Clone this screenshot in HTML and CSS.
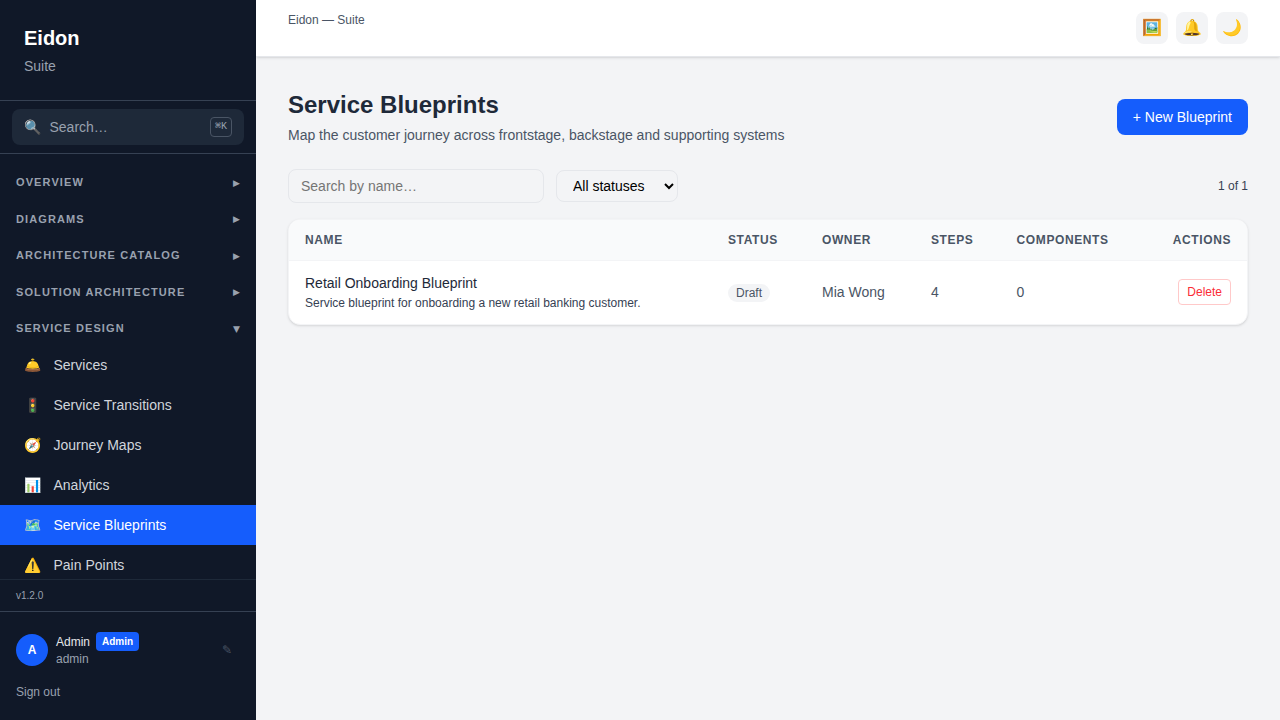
FILE: index.html
```html
<!DOCTYPE html>
<html lang="en">
<head>
    <meta charset="UTF-8">
    <meta name="viewport" content="width=device-width, initial-scale=1.0">
    <title>Eidon — Suite</title>
    <link rel="stylesheet" href="styles.css">
</head>
<body>
<aside class="sidebar">
    <div class="brand">
        <div class="brand-name">Eidon</div>
        <div class="brand-sub">Suite</div>
    </div>
    <div class="search-box">
        <button type="button" class="search-button">
            <span class="search-icon">🔍</span>
            <span class="search-label">Search…</span>
            <kbd>⌘K</kbd>
        </button>
    </div>
    <nav class="nav">
        <button type="button" class="nav-group"><span>Overview</span><span class="arrow">▶</span></button>
        <button type="button" class="nav-group"><span>Diagrams</span><span class="arrow">▶</span></button>
        <button type="button" class="nav-group"><span>Architecture Catalog</span><span class="arrow">▶</span></button>
        <button type="button" class="nav-group"><span>Solution Architecture</span><span class="arrow">▶</span></button>
        <button type="button" class="nav-group open"><span>Service Design</span><span class="arrow">▼</span></button>
        <a href="#" class="nav-item"><span class="nav-icon">🛎️</span>Services</a>
        <a href="#" class="nav-item"><span class="nav-icon">🚦</span>Service Transitions</a>
        <a href="#" class="nav-item"><span class="nav-icon">🧭</span>Journey Maps</a>
        <a href="#" class="nav-item"><span class="nav-icon">📊</span>Analytics</a>
        <a href="#" class="nav-item active"><span class="nav-icon">🗺️</span>Service Blueprints</a>
        <a href="#" class="nav-item"><span class="nav-icon">⚠️</span>Pain Points</a>
    </nav>
    <div class="version">v1.2.0</div>
    <div class="user-panel">
        <div class="user">
            <div class="avatar">A</div>
            <div class="user-info">
                <div class="user-name">Admin <span class="role">Admin</span></div>
                <div class="user-login">admin</div>
            </div>
            <button type="button" class="edit-button">✎</button>
        </div>
        <button type="button" class="sign-out">Sign out</button>
    </div>
</aside>
<div class="content">
    <header class="topbar">
        <div class="breadcrumb">Eidon — Suite</div>
        <div class="topbar-actions">
            <button type="button" class="icon-button">🖼️</button>
            <button type="button" class="icon-button">🔔</button>
            <button type="button" class="icon-button">🌙</button>
        </div>
    </header>
    <main>
        <div class="page-header">
            <div>
                <h1>Service Blueprints</h1>
                <p>Map the customer journey across frontstage, backstage and supporting systems</p>
            </div>
            <button type="button" class="primary-button">+ New Blueprint</button>
        </div>
        <div class="filters">
            <input type="text" placeholder="Search by name…">
            <select>
                <option>All statuses</option>
                <option>Draft</option>
            </select>
            <span class="count">1 of 1</span>
        </div>
        <div class="card">
            <table>
                <thead>
                <tr>
                    <th class="col-name">Name</th>
                    <th class="col-status">Status</th>
                    <th class="col-owner">Owner</th>
                    <th class="col-steps">Steps</th>
                    <th class="col-components">Components</th>
                    <th class="col-actions">Actions</th>
                </tr>
                </thead>
                <tbody>
                <tr>
                    <td>
                        <div class="row-title">Retail Onboarding Blueprint</div>
                        <div class="row-desc">Service blueprint for onboarding a new retail banking customer.</div>
                    </td>
                    <td><span class="badge">Draft</span></td>
                    <td>Mia Wong</td>
                    <td>4</td>
                    <td>0</td>
                    <td class="col-actions"><button type="button" class="delete-button">Delete</button></td>
                </tr>
                </tbody>
            </table>
        </div>
    </main>
</div>
</body>
</html>
```
FILE: styles.css
```css
* {
    box-sizing: border-box;
}
body {
    margin: 0;
    display: flex;
    height: 100vh;
    overflow: hidden;
    font-family: "Liberation Sans", Arial, sans-serif;
    font-size: 14px;
    line-height: 20px;
    color: #1e2939;
    background-color: #f3f4f6;
}
button, input, select {
    font-family: inherit;
    font-size: 14px;
    line-height: 20px;
    margin: 0;
}
button {
    border: none;
    background: none;
    padding: 0;
    cursor: pointer;
}
.sidebar {
    width: 256px;
    flex-shrink: 0;
    display: flex;
    flex-direction: column;
    background-color: #101828;
    color: #fff;
}
.brand {
    padding: 24px;
    border-bottom: 1px solid #364153;
}
.brand-name {
    font-size: 20px;
    line-height: 28px;
    font-weight: bold;
}
.brand-sub {
    margin-top: 4px;
    color: #99a1af;
}
.search-box {
    padding: 8px 12px;
    border-bottom: 1px solid #364153;
}
.search-button {
    display: flex;
    align-items: center;
    gap: 8px;
    width: 100%;
    height: 36px;
    padding: 0 12px;
    border-radius: 8px;
    background-color: #1e2939;
    color: #99a1af;
    text-align: left;
}
.search-icon, .nav-icon {
    width: 17.5px;
}
.search-label {
    flex: 1;
}
kbd {
    height: 20px;
    padding: 1px 4px 0;
    border: 1px solid #4a5565;
    border-radius: 4px;
    font-family: "Liberation Mono", monospace;
    font-size: 10px;
    line-height: 16px;
}
.nav {
    flex: 1;
    min-height: 0;
    padding-top: 12px;
    overflow: hidden;
}
.nav-group {
    display: flex;
    align-items: center;
    justify-content: space-between;
    width: 100%;
    margin-bottom: 4px;
    padding: 8px 16px;
    color: #99a1af;
    font-size: 11px;
    line-height: 16.5px;
    font-weight: bold;
    letter-spacing: 1.1px;
    text-transform: uppercase;
}
.nav-group.open {
    margin-bottom: 0;
}
.arrow {
    margin-top: 2px;
    font-family: "DejaVu Sans", sans-serif;
    font-size: 9px;
    font-weight: normal;
    line-height: 13.5px;
    letter-spacing: 0;
}
.nav-item {
    display: flex;
    align-items: center;
    gap: 12px;
    height: 40px;
    padding: 0 24px;
    color: #d1d5dc;
    text-decoration: none;
}
.nav-item.active {
    background-color: #155dfc;
    color: #fff;
}
.version {
    padding: 8px 16px;
    border-top: 1px solid #1e2939;
    color: #99a1af;
    font-size: 10px;
    line-height: 15px;
}
.user-panel {
    height: 109px;
    padding: 20px 16px;
    border-top: 1px solid #364153;
    font-size: 12px;
    line-height: 16px;
}
.user {
    display: flex;
    align-items: center;
    gap: 8px;
    height: 36px;
    margin-bottom: 16px;
}
.avatar {
    width: 32px;
    height: 32px;
    border-radius: 50%;
    background-color: #155dfc;
    font-weight: bold;
    line-height: 32px;
    text-align: center;
}
.user-info {
    flex: 1;
    padding-bottom: 1px;
}
.user-name {
    display: flex;
    align-items: center;
    gap: 6px;
    color: #e5e7eb;
}
.role {
    padding: 2px 6px;
    border-radius: 4px;
    background-color: #155dfc;
    color: #fff;
    font-size: 10px;
    line-height: 15px;
    font-weight: bold;
}
.user-login {
    color: #99a1af;
}
.edit-button {
    padding: 0 8px;
    color: #4a5565;
    font-size: 12px;
    line-height: 16px;
}
.sign-out {
    display: block;
    color: #99a1af;
    font-size: 12px;
    line-height: 16px;
}
.content {
    flex: 1;
    min-width: 0;
}
.topbar {
    display: flex;
    justify-content: space-between;
    padding: 12px 32px;
    border-bottom: 1px solid #e5e7eb;
    background-color: #fff;
    box-shadow: 0 1px 3px rgba(0, 0, 0, 0.1), 0 1px 2px -1px rgba(0, 0, 0, 0.1);
}
.breadcrumb {
    color: #4a5565;
    font-size: 12px;
    line-height: 16px;
}
.topbar-actions {
    display: flex;
    gap: 8px;
}
.icon-button {
    width: 32px;
    height: 32px;
    border-radius: 8px;
    background-color: #f3f4f6;
    font-size: 16px;
    line-height: 24px;
}
main {
    padding: 32px;
}
.page-header {
    display: flex;
    align-items: center;
    justify-content: space-between;
    margin-bottom: 24px;
}
h1 {
    margin: 0 0 4px;
    font-size: 24px;
    line-height: 32px;
}
p {
    margin: 0;
    color: #4a5565;
}
.primary-button {
    padding: 8px 16px;
    border-radius: 8px;
    background-color: #155dfc;
    color: #fff;
}
.filters {
    display: flex;
    align-items: center;
    gap: 12px;
    margin-bottom: 16px;
}
.filters input {
    width: 256px;
    height: 34px;
    padding: 6px 12px;
    border: 1px solid #e5e7eb;
    border-radius: 8px;
    background: transparent;
}
.filters select {
    width: 122px;
    height: 32px;
    padding: 0 12px;
    border: 1px solid #e5e7eb;
    border-radius: 8px;
    background-color: transparent;
    color: #000;
}
.count {
    margin-left: auto;
    color: #364153;
    font-size: 12px;
    line-height: 16px;
}
.card {
    overflow: hidden;
    border: 1px solid #f3f4f6;
    border-radius: 12px;
    background-color: #fff;
    box-shadow: 0 1px 3px rgba(0, 0, 0, 0.1), 0 1px 2px -1px rgba(0, 0, 0, 0.1);
}
table {
    width: 100%;
    table-layout: fixed;
    border-spacing: 0;
    color: #4a5565;
}
th {
    padding: 12px 16px;
    border-bottom: 1px solid #f3f4f6;
    background-color: #f9fafb;
    font-size: 12px;
    line-height: 16px;
    letter-spacing: 0.6px;
    text-align: left;
    text-transform: uppercase;
}
td {
    height: 63px;
    padding: 0 16px 1px;
}
.col-name {
    width: 423px;
}
.col-status {
    width: 94px;
}
.col-owner {
    width: 109px;
}
.col-steps {
    width: 85.6px;
}
.col-components {
    width: 133px;
}
.col-actions {
    text-align: right;
}
.row-title {
    color: #1e2939;
}
.row-desc {
    margin-top: 2px;
    color: #364153;
    font-size: 12px;
    line-height: 16px;
}
.badge {
    display: inline-block;
    margin-top: 1px;
    padding: 1px 8px;
    border-radius: 9px;
    background-color: #f3f4f6;
    font-size: 12px;
    line-height: 16px;
}
.delete-button {
    height: 26px;
    padding: 0 8px;
    border: 1px solid #ffc9c9;
    border-radius: 4px;
    color: #fb2c36;
    font-size: 12px;
    line-height: 16px;
}
```
